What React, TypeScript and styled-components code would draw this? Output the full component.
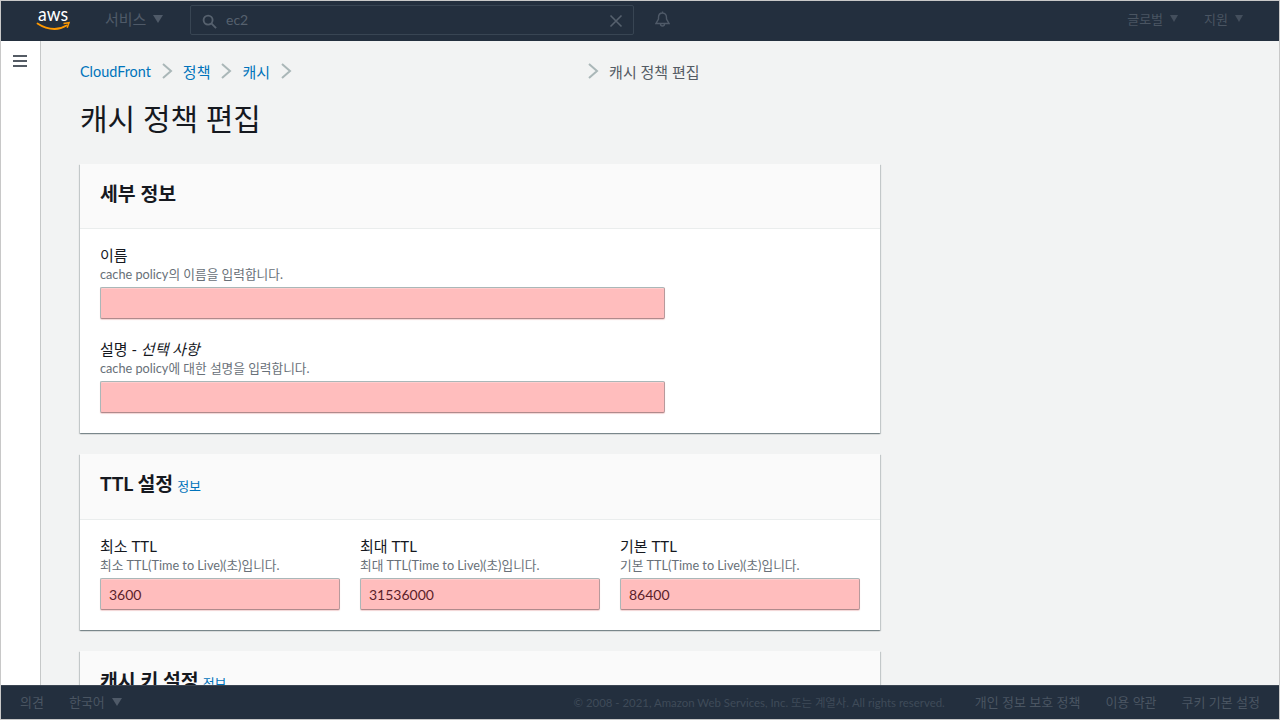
import React from 'react';
import styled, { createGlobalStyle } from 'styled-components';

const Global = createGlobalStyle`
  html, body { margin: 0; padding: 0; height: 100%; overflow: hidden; background: #f2f3f3; }
  * { box-sizing: border-box; }
  body { font-family: "Lato", "Noto Sans CJK KR", sans-serif; color: #16191f; }
`;

const Shell = styled.div`
  width: 1280px; height: 720px; display: flex; flex-direction: column;
  border: 1px solid #c8c8c8; overflow: hidden; background: #f2f3f3;
`;
const Bar = styled.header`
  height: 40px; flex: none; background: #232f3e; display: flex; align-items: center;
  padding-bottom: 3px; color: #4f5a68;
`;
const Logo = styled.svg`
  width: 36px; height: 37px; margin-left: 35px; margin-top: 3px; flex: none;
`;
const Services = styled.div`
  margin-left: 33px; width: 60px; display: flex; align-items: center; gap: 7px; font-size: 15px;
  white-space: nowrap; margin-top: -2px;
`;
const Caret = styled.span`
  width: 0; height: 0; border-left: 5px solid transparent; border-right: 5px solid transparent;
  border-top: 8px solid #4f5a68; display: inline-block; flex: none;
`;
const Search = styled.div`
  margin-left: 25px; width: 444px; height: 30px; border: 1px solid #384553; border-radius: 2px;
  display: flex; align-items: center; padding: 0 10px 0 11px; color: #56616e; font-size: 14px;
`;
const SearchText = styled.span`
  flex: 1; margin-left: 9px;
`;
const LoweredIcon = styled.svg`
  margin-top: 3px; flex: none;
`;
const BellWrap = styled.div`
  margin-left: 21px; display: flex; color: #4f5a68;
`;
const BarRight = styled.div`
  margin-left: auto; display: flex; align-items: center; gap: 26px; padding-right: 36px; font-size: 13px;
  color: #4a5562; margin-top: -2px;
`;
const BarMenu = styled.div`
  display: flex; align-items: center; gap: 7px;
`;
const SmallCaret = styled(Caret)`
  border-left-width: 4.500px; border-right-width: 4.500px; border-top-width: 7px; border-top-color: #434e5c;
`;

const Middle = styled.div`
  flex: 1; min-height: 0; display: flex; overflow: hidden;
`;
const Side = styled.aside`
  width: 40px; flex: none; background: #fff; border-right: 1px solid #c6c8c8; padding: 14px 0 0 12px;
`;
const Burger = styled.div`
  width: 14px; height: 12px; display: flex; flex-direction: column; justify-content: space-between;
`;
const BurgerLine = styled.span`
  height: 2px; background: #545b64; display: block;
`;
const Main = styled.main`
  flex: 1; min-width: 0; padding: 20px 0 0 39px; overflow: hidden;
`;
const Crumbs = styled.nav`
  display: flex; align-items: center; height: 20px;
`;
const Crumb = styled.a<{ $latin?: boolean }>`
  color: #0073bb; font-size: ${p => (p.$latin ? '14.4px' : '15px')};
`;
const CrumbSvg = styled.svg`
  width: 12px; height: 16px; margin: 0 10px; flex: none;
`;
const CrumbGap = styled.span`
  width: 275px; flex: none;
`;
const CrumbCurrent = styled.span`
  color: #545b64; font-size: 15px;
`;
const Title = styled.h1`
  font-weight: 400; font-size: 30px; line-height: 36px; margin: 19px 0 28px; color: #16191f;
`;
const Card = styled.section`
  width: 800px; background: #fff; margin-bottom: 21px;
  box-shadow: 0 1px 1px 0 rgba(0,28,36,.3), 1px 1px 1px 0 rgba(0,28,36,.15), -1px 1px 1px 0 rgba(0,28,36,.15);
`;
const CardHead = styled.div<{ $tall?: boolean }>`
  height: ${p => (p.$tall ? '66px' : '65px')}; background: #fafafa; border-bottom: 1px solid #eaeded;
  padding: 0 20px ${p => (p.$tall ? '6px' : '4px')}; display: flex; align-items: center; gap: 4px;
`;
const CardTitle = styled.h2`
  font-size: 19.4px; font-weight: 700; margin: 0; color: #16191f; line-height: 26px;
`;
const Info = styled.a`
  color: #0073bb; font-size: 13px; align-self: center; margin-top: 4px;
`;
const CardBody = styled.div`
  padding: 15px 20px 20px; display: flex; flex-direction: column; gap: 19px;
`;
const Triple = styled.div`
  display: grid; grid-template-columns: repeat(3, 240px); gap: 20px;
`;
const Field = styled.div`
  display: flex; flex-direction: column;
`;
const Label = styled.label`
  font-size: 15px; line-height: 23px; color: #16191f;
`;
const Opt = styled.i`
  font-style: italic;
`;
const Hint = styled.div`
  font-size: 12.7px; line-height: 16px; color: #687078; margin: -1px 0 5px;
`;
const Input = styled.div<{ $wide?: boolean }>`
  width: ${p => (p.$wide ? '565px' : '240px')}; height: 32px; background: #ffbdbd;
  border: 1px solid #aab7b8; border-bottom-color: #b08a8c; border-right-color: #b79a9c; border-radius: 2px;
  box-shadow: 0 1px 1px rgba(200,80,80,.25), inset 0 1px 0 rgba(255,255,255,.25);
  padding: 0 8px; display: flex; align-items: center; font-size: 14px; color: #5c1e2a;
`;
const Foot = styled.footer`
  height: 34px; flex: none; background: #232f3e; border-top: 1px solid #3b4552;
  display: flex; align-items: center; padding: 0 19px 2px; color: #4a5562; font-size: 13px;
`;
const FootLang = styled.div`
  margin-left: 25px; display: flex; align-items: center; gap: 7px;
`;
const FootRight = styled.div`
  margin-left: auto; display: flex; align-items: center; gap: 25px;
`;
const Copy = styled.span`
  font-size: 11.4px; margin-right: 5px; color: #3f4b59;
`;

const Chevron = () => (
  <CrumbSvg viewBox="0 0 12 16" fill="none" stroke="#aab7b8" strokeWidth="2">
    <path d="M2 1l8 7-8 7" />
  </CrumbSvg>
);

export default function App() {
  return (
    <>
      <Global />
      <Shell>
        <Bar>
          <Logo viewBox="0 0 36 37" fill="none">
            <text x="2" y="18" fontFamily="Lato, sans-serif" fontWeight="400" fontSize="19" textLength="30" lengthAdjust="spacingAndGlyphs" fill="#fff">aws</text>
            <path d="M1.500 20.500c6 4 12 5.500 17 5.500 4 0 8-1 12-3.500" stroke="#f90" strokeWidth="1.800" strokeLinecap="round" />
            <path d="M27.500 20.500l5.500-.8-1.800 5" stroke="#f90" strokeWidth="1.500" />
          </Logo>
          <Services>서비스 <Caret /></Services>
          <Search>
            <LoweredIcon width="15" height="15" viewBox="0 0 16 16" fill="none" stroke="#56616e" strokeWidth="2">
              <circle cx="6.500" cy="6.500" r="4.800" />
              <path d="M10 10l5 5" />
            </LoweredIcon>
            <SearchText>ec2</SearchText>
            <LoweredIcon width="14" height="14" viewBox="0 0 14 14" fill="none" stroke="#56616e" strokeWidth="1.600">
              <path d="M1.500 1.500l11 11M12.500 1.500l-11 11" />
            </LoweredIcon>
          </Search>
          <BellWrap>
            <svg width="15" height="17" viewBox="0 0 15 17" fill="none" stroke="#4f5a68" strokeWidth="1.400">
              <path d="M7.500 2C5 2 3.500 4 3.500 6.500V8L1 12.500h13L11.500 8V6.500C11.500 4 10 2 7.500 2zM7.500 .5V2M5.500 13a2 2 0 0 0 4 0" />
            </svg>
          </BellWrap>
          <BarRight>
            <BarMenu>글로벌 <SmallCaret /></BarMenu>
            <BarMenu>지원 <SmallCaret /></BarMenu>
          </BarRight>
        </Bar>
        <Middle>
          <Side>
            <Burger><BurgerLine /><BurgerLine /><BurgerLine /></Burger>
          </Side>
          <Main>
            <Crumbs>
              <Crumb $latin>CloudFront</Crumb><Chevron />
              <Crumb>정책</Crumb><Chevron />
              <Crumb>캐시</Crumb><Chevron />
              <CrumbGap />
              <Chevron />
              <CrumbCurrent>캐시 정책 편집</CrumbCurrent>
            </Crumbs>
            <Title>캐시 정책 편집</Title>
            <Card>
              <CardHead><CardTitle>세부 정보</CardTitle></CardHead>
              <CardBody>
                <Field>
                  <Label>이름</Label>
                  <Hint>cache policy의 이름을 입력합니다.</Hint>
                  <Input $wide />
                </Field>
                <Field>
                  <Label>설명 - <Opt>선택 사항</Opt></Label>
                  <Hint>cache policy에 대한 설명을 입력합니다.</Hint>
                  <Input $wide />
                </Field>
              </CardBody>
            </Card>
            <Card>
              <CardHead $tall><CardTitle>TTL 설정</CardTitle><Info>정보</Info></CardHead>
              <CardBody>
                <Triple>
                  <Field>
                    <Label>최소 TTL</Label>
                    <Hint>최소 TTL(Time to Live)(초)입니다.</Hint>
                    <Input>3600</Input>
                  </Field>
                  <Field>
                    <Label>최대 TTL</Label>
                    <Hint>최대 TTL(Time to Live)(초)입니다.</Hint>
                    <Input>31536000</Input>
                  </Field>
                  <Field>
                    <Label>기본 TTL</Label>
                    <Hint>기본 TTL(Time to Live)(초)입니다.</Hint>
                    <Input>86400</Input>
                  </Field>
                </Triple>
              </CardBody>
            </Card>
            <Card>
              <CardHead $tall><CardTitle>캐시 키 설정</CardTitle><Info>정보</Info></CardHead>
            </Card>
          </Main>
        </Middle>
        <Foot>
          <span>의견</span>
          <FootLang>한국어 <Caret /></FootLang>
          <FootRight>
            <Copy>© 2008 - 2021, Amazon Web Services, Inc. 또는 계열사. All rights reserved.</Copy>
            <span>개인 정보 보호 정책</span>
            <span>이용 약관</span>
            <span>쿠키 기본 설정</span>
          </FootRight>
        </Foot>
      </Shell>
    </>
  );
}
